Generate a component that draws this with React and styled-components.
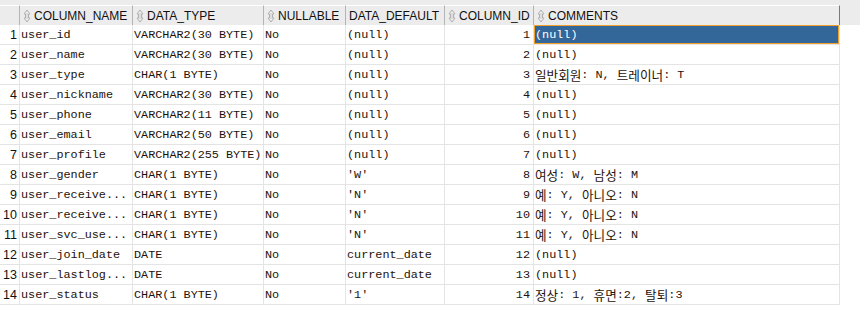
import React from 'react';
import styled, { createGlobalStyle } from 'styled-components';

const GlobalStyle = createGlobalStyle`
  body {
    margin: 0;
    background: #ffffff;
  }
`;

const Frame = styled.div`
  width: 860px;
  height: 320px;
  padding-top: 5px;
  box-sizing: border-box;
  background: linear-gradient(#ececec 0 25px, #ffffff 25px);
`;

const Grid = styled.div`
  display: grid;
  grid-template-columns: 20px 113px 131px 82px 99px 89px 306px;
  grid-auto-rows: 20px;
  width: 840px;
`;

const HeadCell = styled.div`
  display: flex;
  align-items: center;
  gap: 3px;
  box-sizing: border-box;
  height: 20px;
  padding-left: 3px;
  background: #ececec;
  border-top: 1px solid #ffffff;
  border-right: 1px solid ${({ $last }) => ($last ? '#7a7a7a' : '#b4b4b4')};
  font-family: 'Liberation Sans', Arial, sans-serif;
  font-size: 12px;
  color: #111;
  white-space: nowrap;
  overflow: hidden;
`;

const RowNum = styled.div`
  display: flex;
  align-items: center;
  justify-content: flex-end;
  padding-right: 2px;
  border-right: 1px solid #e4e4e4;
  border-bottom: 1px solid #e4e4e4;
  font-family: 'Liberation Sans', Arial, sans-serif;
  font-size: 12.5px;
  color: #111;
`;

const Cell = styled.div`
  display: flex;
  align-items: center;
  justify-content: ${({ $right }) => ($right ? 'flex-end' : 'flex-start')};
  padding: 0 ${({ $right }) => ($right ? '3px' : '0')} 0 ${({ $right }) => ($right ? '0' : '1px')};
  border-right: 1px solid #e4e4e4;
  border-bottom: 1px solid #e4e4e4;
  font-family: 'Liberation Mono', 'Courier New', 'Noto Sans CJK KR', monospace;
  font-size: 11.8px;
  color: ${({ $selected }) => ($selected ? '#ffffff' : '#1e120a')};
  background: ${({ $selected }) => ($selected ? '#336699' : 'transparent')};
  box-shadow: ${({ $selected }) => ($selected ? 'inset 0 0 0 1px #f2a02c' : 'none')};
  white-space: pre;
  overflow: hidden;
`;

const Hangul = styled.span`
  font-family: 'Noto Sans CJK KR', sans-serif;
  font-size: 12.6px;
`;

const SortIcon = () => (
  <svg width="8" height="14" viewBox="0 0 8 14">
    <path d="M4 1 L7 5 L5.5 5 L5.5 9 L7 9 L4 13 L1 9 L2.5 9 L2.5 5 L1 5 Z" fill="none" stroke="#b0b0b0" strokeWidth="1" />
    <path d="M4 4 L4 10" stroke="#cfcfcf" strokeWidth="1" />
  </svg>
);

const columns = [
  { name: 'COLUMN_NAME', icon: true },
  { name: 'DATA_TYPE', icon: true },
  { name: 'NULLABLE', icon: true },
  { name: 'DATA_DEFAULT', icon: false },
  { name: 'COLUMN_ID', icon: true },
  { name: 'COMMENTS', icon: true },
];

const rows = [
  ['user_id', 'VARCHAR2(30 BYTE)', 'No', '(null)', '1', '(null)'],
  ['user_name', 'VARCHAR2(30 BYTE)', 'No', '(null)', '2', '(null)'],
  ['user_type', 'CHAR(1 BYTE)', 'No', '(null)', '3', '일반회원: N, 트레이너: T'],
  ['user_nickname', 'VARCHAR2(30 BYTE)', 'No', '(null)', '4', '(null)'],
  ['user_phone', 'VARCHAR2(11 BYTE)', 'No', '(null)', '5', '(null)'],
  ['user_email', 'VARCHAR2(50 BYTE)', 'No', '(null)', '6', '(null)'],
  ['user_profile', 'VARCHAR2(255 BYTE)', 'No', '(null)', '7', '(null)'],
  ['user_gender', 'CHAR(1 BYTE)', 'No', "'W'", '8', '여성: W, 남성: M'],
  ['user_receive...', 'CHAR(1 BYTE)', 'No', "'N'", '9', '예: Y, 아니오: N'],
  ['user_receive...', 'CHAR(1 BYTE)', 'No', "'N'", '10', '예: Y, 아니오: N'],
  ['user_svc_use...', 'CHAR(1 BYTE)', 'No', "'N'", '11', '예: Y, 아니오: N'],
  ['user_join_date', 'DATE', 'No', 'current_date', '12', '(null)'],
  ['user_lastlog...', 'DATE', 'No', 'current_date', '13', '(null)'],
  ['user_status', 'CHAR(1 BYTE)', 'No', "'1'", '14', '정상: 1, 휴면:2, 탈퇴:3'],
];

// split text so Hangul runs get the CJK font, the rest stays monospace
const renderText = (text) =>
  text.split(/([\uAC00-\uD7A3]+)/).map((part, i) =>
    /[\uAC00-\uD7A3]/.test(part) ? <Hangul key={i}>{part}</Hangul> : part
  );

const App = () => {
  return (
    <>
      <GlobalStyle />
      <Frame>
        <Grid>
          <HeadCell />
          {columns.map((col, i) => (
            <HeadCell key={col.name} $last={i === columns.length - 1}>
              {col.icon && <SortIcon />}
              {col.name}
            </HeadCell>
          ))}
          {rows.map((row, r) => (
            <React.Fragment key={r}>
              <RowNum>{r + 1}</RowNum>
              {row.map((value, c) => (
                <Cell key={c} $right={c === 4} $selected={r === 0 && c === 5}>
                  {renderText(value)}
                </Cell>
              ))}
            </React.Fragment>
          ))}
        </Grid>
      </Frame>
    </>
  );
};

export default App;
